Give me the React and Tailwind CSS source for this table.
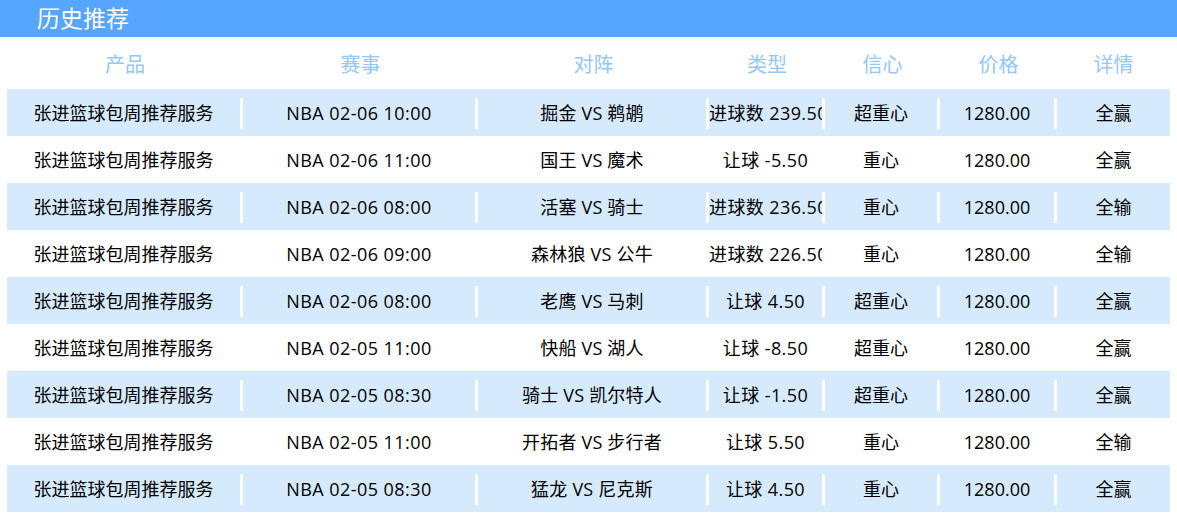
import React from "react";

const rows = [
  ["张进篮球包周推荐服务", "NBA 02-06 10:00", "掘金 VS 鹈鹕", "进球数 239.50", "超重心", "1280.00", "全赢"],
  ["张进篮球包周推荐服务", "NBA 02-06 11:00", "国王 VS 魔术", "让球 -5.50", "重心", "1280.00", "全赢"],
  ["张进篮球包周推荐服务", "NBA 02-06 08:00", "活塞 VS 骑士", "进球数 236.50", "重心", "1280.00", "全输"],
  ["张进篮球包周推荐服务", "NBA 02-06 09:00", "森林狼 VS 公牛", "进球数 226.50", "重心", "1280.00", "全输"],
  ["张进篮球包周推荐服务", "NBA 02-06 08:00", "老鹰 VS 马刺", "让球 4.50", "超重心", "1280.00", "全赢"],
  ["张进篮球包周推荐服务", "NBA 02-05 11:00", "快船 VS 湖人", "让球 -8.50", "超重心", "1280.00", "全赢"],
  ["张进篮球包周推荐服务", "NBA 02-05 08:30", "骑士 VS 凯尔特人", "让球 -1.50", "超重心", "1280.00", "全赢"],
  ["张进篮球包周推荐服务", "NBA 02-05 11:00", "开拓者 VS 步行者", "让球 5.50", "重心", "1280.00", "全输"],
  ["张进篮球包周推荐服务", "NBA 02-05 08:30", "猛龙 VS 尼克斯", "让球 4.50", "重心", "1280.00", "全赢"],
];

const headers = ["产品", "赛事", "对阵", "类型", "信心", "价格", "详情"];
const widths = ["w-[236px]", "w-[235px]", "w-[231px]", "w-[116px]", "w-[115px]", "w-[117px]", "w-[113px]"];
const extras = ["", "tracking-[0.45px]", "tracking-[0.2px]", "tracking-[0.4px]", "", "", ""];

export default function App() {
  return (
    <div
      className="w-[1177px] h-[516px] bg-white overflow-hidden"
      style={{ fontFamily: '"Open Sans", "Noto Sans CJK SC", sans-serif' }}
    >
      <div className="h-[37px] bg-[#56a5ff] flex items-center pl-[37px]">
        <span className="text-white text-[23px] leading-none">历史推荐</span>
      </div>
      <div className="px-[7px]">
        <div className="flex h-[52px] items-center pt-[3px]">
          {headers.map((h, i) => (
            <div key={i} className={`${widths[i]} shrink-0 text-center text-[20px] leading-none text-[#93c7f7]`}>
              {h}
            </div>
          ))}
        </div>
        {rows.map((r, ri) => (
          <div
            key={ri}
            className={`flex h-[47px] items-center pt-[1px] ${ri % 2 === 0 ? "bg-[#d6eafd]" : "bg-white"}`}
          >
            {r.map((c, ci) => (
              <div
                key={ci}
                className={`${widths[ci]} shrink-0 h-[31px] flex items-center justify-center overflow-hidden whitespace-nowrap text-[18px] leading-none text-black ${extras[ci]} ${ci < 6 ? "border-r-[3px] border-white" : ""}`}
              >
                <span className={ci === 3 ? "block w-full text-center" : ""}>{c}</span>
              </div>
            ))}
          </div>
        ))}
      </div>
    </div>
  );
}
